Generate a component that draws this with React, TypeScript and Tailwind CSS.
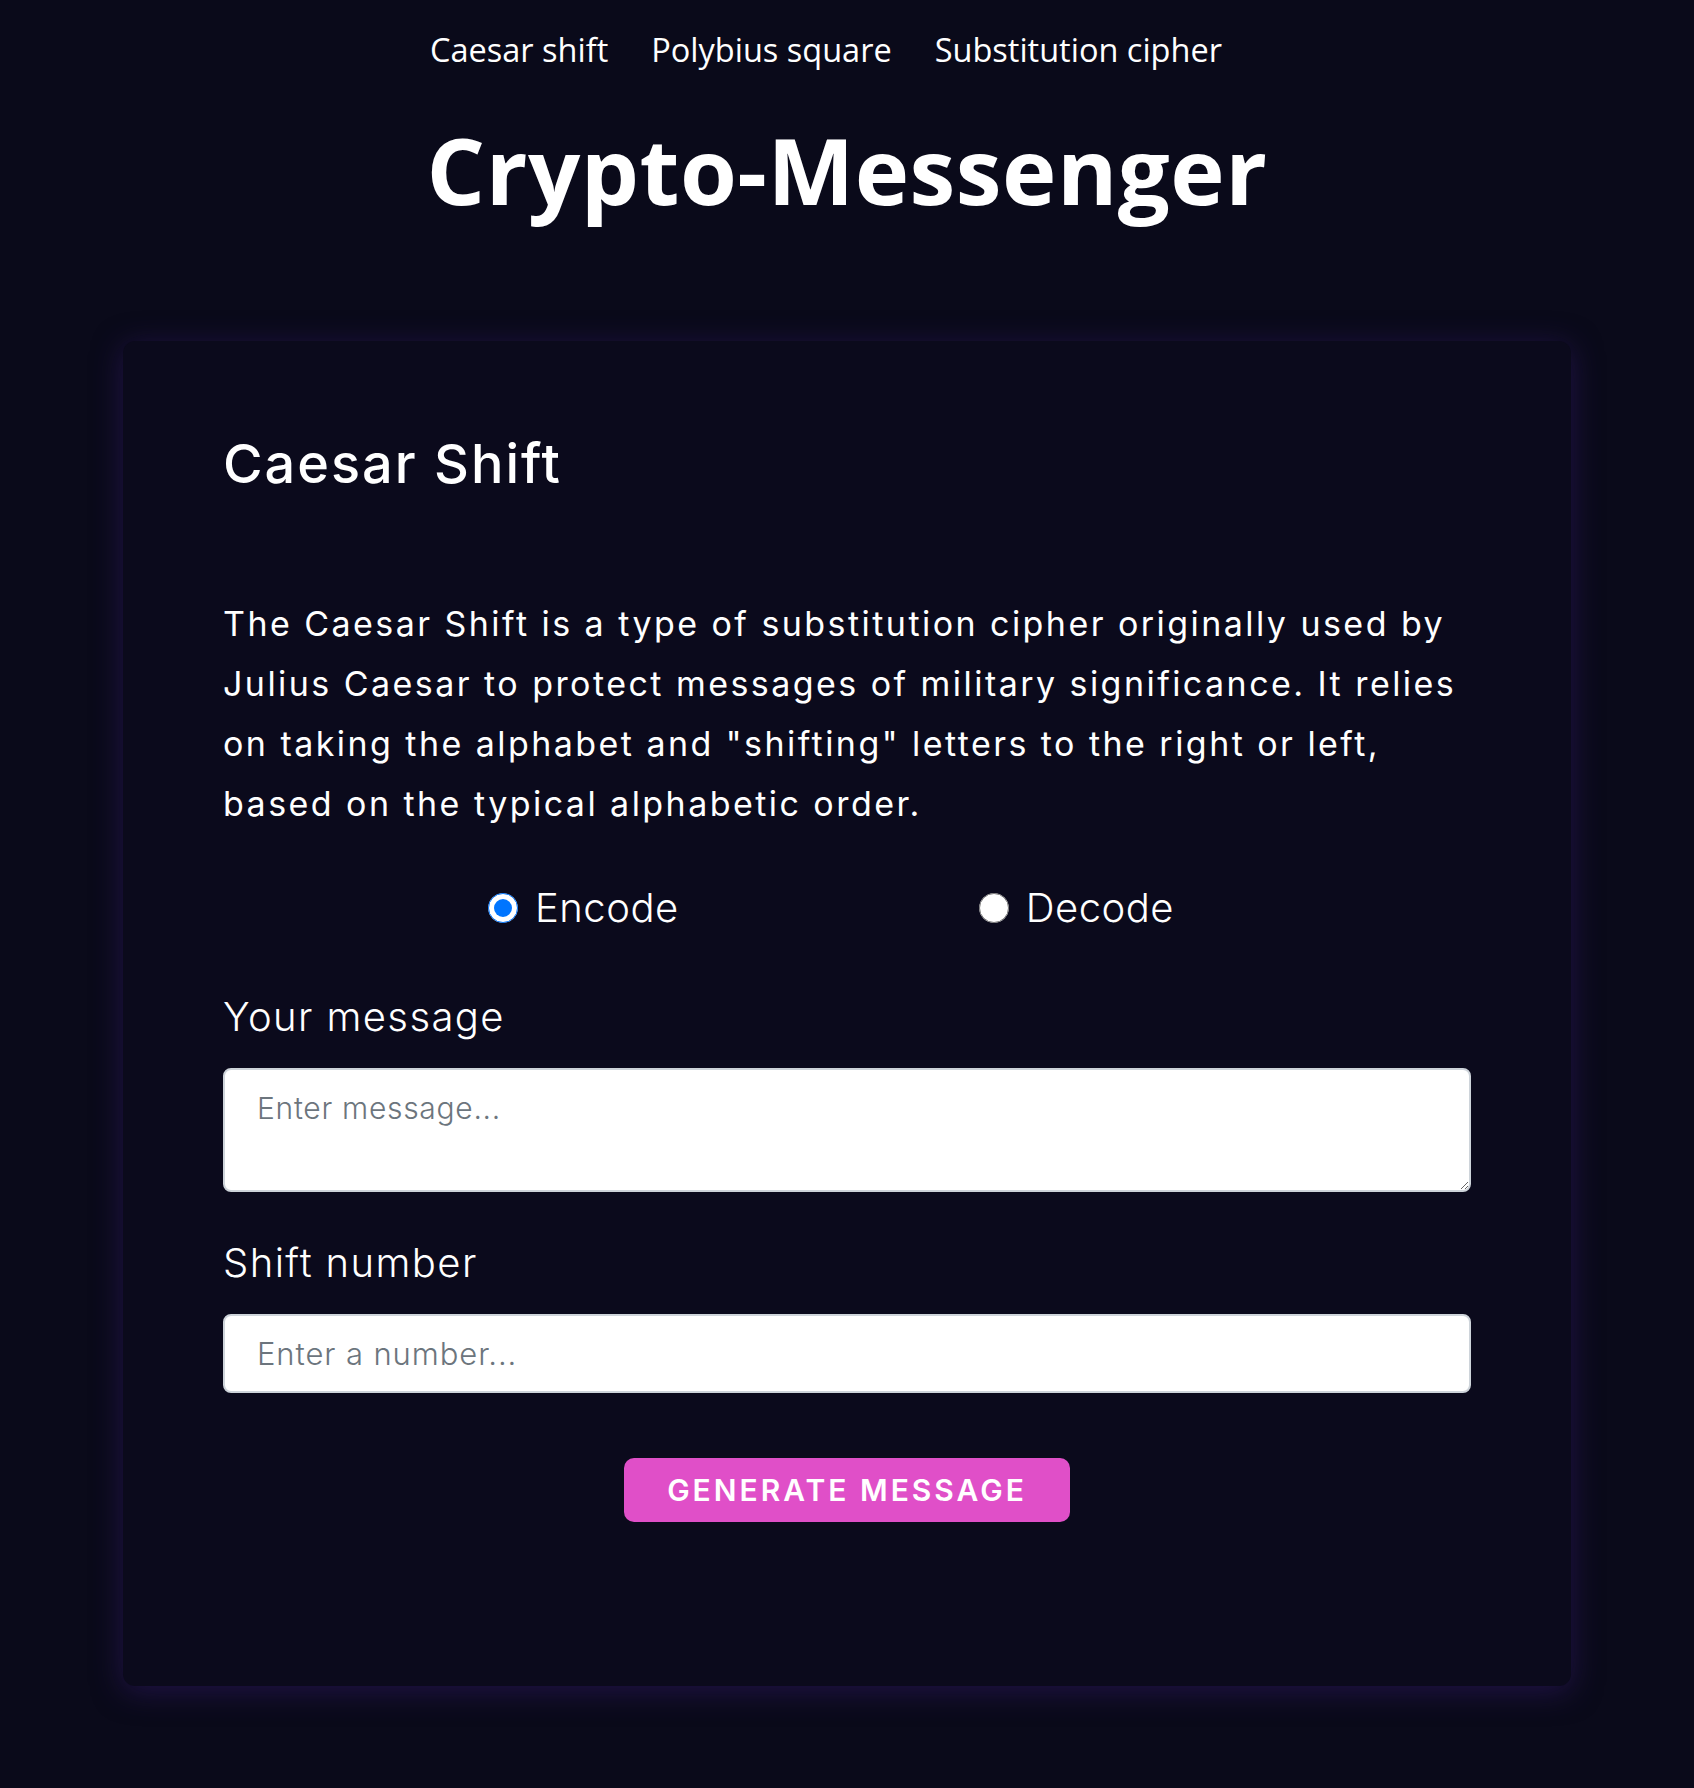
import { useState } from 'react';

const navLinks = ['Caesar shift', 'Polybius square', 'Substitution cipher'];

export default function App() {
  const [mode, setMode] = useState<'encode' | 'decode'>('encode');
  const [message, setMessage] = useState('');
  const [shift, setShift] = useState('');

  return (
    <div className="min-h-screen bg-[#0a0a1a] text-white pb-[100px]">
      {/* Top navigation */}
      <nav className="flex justify-center gap-[43px] pt-[28px] pr-[42px] font-['Open_Sans',sans-serif] text-[32.5px] leading-[44px]">
        {navLinks.map((link) => (
          <a key={link} href="#" className="text-white">
            {link}
          </a>
        ))}
      </nav>

      <h1 className="mt-[28px] text-center font-['Open_Sans',sans-serif] text-[92px] font-bold leading-[140px] tracking-[0.5px]">
        Crypto-Messenger
      </h1>

      {/* Cipher card */}
      <div className="mx-[123px] mt-[101px] rounded-[12px] bg-[#0b0a1c] px-[100px] pt-[93px] pb-[164px] shadow-[0_5px_30px_rgba(55,28,115,0.5)] font-['Inter',sans-serif]">
        <h2 className="text-[54px] font-medium leading-[60px] tracking-[2px]">Caesar Shift</h2>

        <p className="mt-[100px] text-[34px] leading-[60px] tracking-[2.45px] font-normal">
          The Caesar Shift is a type of substitution cipher originally used by
          <br />
          Julius Caesar to protect messages of military significance. It relies
          <br />
          on taking the alphabet and "shifting" letters to the right or left,
          <br />
          based on the typical alphabetic order.
        </p>

        <div className="mt-[44px] flex justify-center gap-[300px] pr-[32px] text-[40px] font-light tracking-[0.5px]">
          <label className="flex items-center gap-[17px]">
            <input
              type="radio"
              name="mode"
              checked={mode === 'encode'}
              onChange={() => setMode('encode')}
              className="m-0 h-[30px] w-[30px]"
            />
            Encode
          </label>
          <label className="flex items-center gap-[17px]">
            <input
              type="radio"
              name="mode"
              checked={mode === 'decode'}
              onChange={() => setMode('decode')}
              className="m-0 h-[30px] w-[30px]"
            />
            Decode
          </label>
        </div>

        <label className="mt-[52px] block text-[40px] font-light leading-[54px] tracking-[1.4px]">Your message</label>
        <textarea
          value={message}
          onChange={(e) => setMessage(e.target.value)}
          placeholder="Enter message..."
          className="mt-[24px] block h-[124px] w-full rounded-[8px] border-2 border-[#ced4da] bg-white px-[32px] py-[16px] text-[30px] font-light tracking-[0.7px] text-[#212529] placeholder:text-[#6c757d] outline-none"
        />

        <label className="mt-[44px] block text-[40px] font-light leading-[54px] tracking-[1.4px]">Shift number</label>
        <input
          type="text"
          value={shift}
          onChange={(e) => setShift(e.target.value)}
          placeholder="Enter a number..."
          className="mt-[24px] block h-[79px] w-full rounded-[8px] border-2 border-[#ced4da] bg-white px-[32px] text-[31px] font-light tracking-[0.9px] text-[#212529] placeholder:text-[#6c757d] outline-none"
        />

        <div className="mt-[65px] flex justify-center">
          <button className="h-[64px] w-[446px] rounded-[10px] bg-[#e04fc8] text-[30px] font-semibold tracking-[3px] text-white">
            GENERATE MESSAGE
          </button>
        </div>
      </div>
    </div>
  );
}
